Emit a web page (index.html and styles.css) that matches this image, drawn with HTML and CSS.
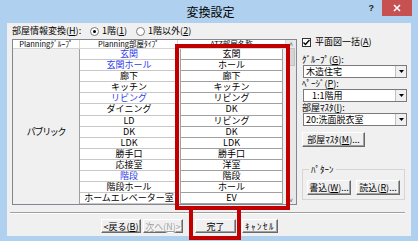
FILE: index.html
```html
<!DOCTYPE html>
<html lang="ja">
<head>
  <meta charset="UTF-8">
  <title>変換設定</title>
  <link rel="stylesheet" href="styles.css">
</head>
<body>

<div class="window">
  <div class="titlebar">
    <span></span>
    <span class="title">変換設定</span>
    <div class="controls">
      <span class="help">?</span>
      <span class="close">
        <svg width="8" height="8" viewBox="0 0 8 8"><path d="M1 1L7 7M7 1L1 7" stroke="#fff" stroke-width="1.6"/></svg>
      </span>
    </div>
  </div>

  <div class="client">
    <div class="main">
      <div class="left">
        <div class="mode-row">
          <span class="mode-label">部屋情報変換(<u>H</u>):</span>
          <span class="radio checked"></span><span class="radio-text">1階(<u>1</u>)</span>
          <span class="radio"></span><span class="radio-text">1階以外(<u>2</u>)</span>
        </div>

        <div class="grid">
          <div class="head">Planningｸﾞﾙｰﾌﾟ</div>
          <div class="head">Planning部屋ﾀｲﾌﾟ</div>
          <div class="head">ATZ部屋名称</div>
          <div class="scroll">
            <span class="arrow">&#x02C4;</span>
            <span class="thumb"></span>
            <span class="track"></span>
            <span class="arrow">&#x02C5;</span>
          </div>

          <div class="group-cell"><span>パブリック</span></div>

          <div class="type blue">玄関</div><div class="name">玄関</div>
          <div class="type blue">玄関ホール</div><div class="name">ホール</div>
          <div class="type">廊下</div><div class="name">廊下</div>
          <div class="type">キッチン</div><div class="name">キッチン</div>
          <div class="type blue">リビング</div><div class="name">リビング</div>
          <div class="type">ダイニング</div><div class="name">DK</div>
          <div class="type">LD</div><div class="name">リビング</div>
          <div class="type">DK</div><div class="name">DK</div>
          <div class="type">LDK</div><div class="name">LDK</div>
          <div class="type">勝手口</div><div class="name">勝手口</div>
          <div class="type">応接室</div><div class="name">洋室</div>
          <div class="type blue">階段</div><div class="name">階段</div>
          <div class="type">階段ホール</div><div class="name">ホール</div>
          <div class="type">ホームエレベーター室</div><div class="name">EV</div>
        </div>
      </div>

      <div class="side">
        <div class="check-row">
          <span class="checkbox">
            <svg width="7" height="7" viewBox="0 0 7 7"><path d="M0.5 3.5L2.5 5.5L6.5 1" fill="none" stroke="#000" stroke-width="1.4"/></svg>
          </span>
          <span>平面図一括(<u>A</u>)</span>
        </div>

        <div class="field-label">ｸﾞﾙｰﾌﾟ(<u>G</u>):</div>
        <div class="select">
          <span class="value">木造住宅</span>
          <span class="drop"><svg width="5" height="3" viewBox="0 0 5 3"><path d="M0 0H5L2.5 3Z" fill="#000"/></svg></span>
        </div>

        <div class="field-label">ﾍﾟｰｼﾞ(<u>P</u>):</div>
        <div class="select">
          <span class="value indent">1:1階用</span>
          <span class="drop"><svg width="5" height="3" viewBox="0 0 5 3"><path d="M0 0H5L2.5 3Z" fill="#000"/></svg></span>
        </div>

        <div class="field-label">部屋ﾏｽﾀ(<u>I</u>):</div>
        <div class="select">
          <span class="value">20:洗面脱衣室</span>
          <span class="drop"><svg width="5" height="3" viewBox="0 0 5 3"><path d="M0 0H5L2.5 3Z" fill="#000"/></svg></span>
        </div>

        <button class="btn master-btn">部屋ﾏｽﾀ(<u>M</u>)...</button>

        <fieldset class="pattern">
          <legend>ﾊﾟﾀｰﾝ</legend>
          <button class="btn pattern-btn">書込(<u>W</u>)...</button>
          <button class="btn pattern-btn">読込(<u>R</u>)...</button>
        </fieldset>
      </div>
    </div>

    <div class="separator"></div>

    <div class="footer">
      <button class="btn back-btn">&lt;戻る(<u>B</u>)</button>
      <button class="btn next-btn" disabled>次へ(<u>N</u>)&gt;</button>
      <button class="btn done-btn">完了</button>
      <button class="btn cancel-btn">ｷｬﾝｾﾙ</button>
    </div>
  </div>

  <!-- 赤枠 -->
  <div class="mark mark-list"></div>
  <div class="mark mark-ok"></div>
</div>

</body>
</html>
```

FILE: styles.css
```css
* {
  box-sizing: border-box;
}
body {
  margin: 0;
  font-family: "Noto Sans CJK JP", sans-serif;
  font-size: 9px;
  color: #000;
}
u {
  text-decoration: underline;
  text-underline-offset: 1px;
}
.window {
  position: relative;
  width: 418px;
  height: 241px;
  background: #afd0ef;
  display: flex;
  flex-direction: column;
}
.titlebar {
  height: 23px;
  display: grid;
  grid-template-columns: 1fr auto 1fr;
}
.title {
  font-size: 12px;
  line-height: 23px;
  padding-left: 3px;
}
.controls {
  display: flex;
  justify-content: flex-end;
  align-items: flex-start;
  padding-right: 6px;
}
.help {
  font-family: "Liberation Sans", sans-serif;
  font-size: 9px;
  font-weight: bold;
  line-height: 16px;
  margin-right: 8px;
  color: #222;
}
.close {
  width: 30px;
  height: 16px;
  background: #c75050;
  display: flex;
  align-items: center;
  justify-content: center;
}
.client {
  margin: 0 7px 5px;
  height: 213px;
  background: #f0f0f0;
  display: flex;
  flex-direction: column;
}
.main {
  height: 189px;
  display: flex;
}
.left {
  width: 290px;
  padding: 2px 0 0 5px;
}
.mode-row {
  height: 12px;
  display: flex;
  align-items: center;
  line-height: 12px;
}
.mode-label {
  width: 78px;
}
.radio {
  width: 9px;
  height: 9px;
  border: 1px solid #7a7a7a;
  border-radius: 50%;
  background: #fff;
  display: flex;
  align-items: center;
  justify-content: center;
  margin-right: 3px;
}
.radio.checked::after {
  content: "";
  width: 3px;
  height: 3px;
  border-radius: 50%;
  background: #000;
}
.radio-text {
  margin-right: 9px;
}

/* 一覧 */
.grid {
  margin-top: 2px;
  width: 285px;
  border: 1px solid #828790;
  background: #f0f0f0;
  display: grid;
  grid-template-columns: 67px 98px 108px 10px;
  grid-template-rows: 9px repeat(14, 11.1px);
  line-height: 10px;
}
.head {
  background: #fff;
  border-right: 1px solid #d5d5d5;
  border-bottom: 1px solid #d5d5d5;
  text-align: center;
  font-size: 7.5px;
  line-height: 8px;
  white-space: nowrap;
}
.scroll {
  grid-column: 4;
  grid-row: 1 / span 15;
  background: #e8e8e8;
  display: flex;
  flex-direction: column;
  align-items: center;
  font-size: 7px;
  line-height: 8px;
  color: #606060;
}
.thumb {
  width: 7px;
  height: 18px;
  background: #d4d4d4;
  border: 1px solid #c2c2c2;
}
.track {
  flex: 1;
}
.group-cell {
  grid-column: 1;
  grid-row: 2 / span 14;
  border-right: 1px solid #a0a0a0;
  display: flex;
  align-items: center;
  justify-content: center;
  padding-top: 10px;
  letter-spacing: -1.3px;
}
.type {
  grid-column: 2;
  background: #fff;
  border-bottom: 1px solid #c8c8c8;
  text-align: center;
  white-space: nowrap;
}
.blue {
  color: #3040e8;
}
.name {
  grid-column: 3;
  margin: 0 3px 0 2px;
  background: #fff;
  border: 1px solid #a0a0a0;
  border-top: none;
  text-align: center;
}

/* 右側 */
.side {
  width: 106px;
  margin-left: 5px;
  padding-top: 14px;
}
.check-row {
  height: 10px;
  display: flex;
  align-items: center;
  gap: 4px;
  line-height: 10px;
}
.checkbox {
  width: 9px;
  height: 9px;
  border: 1px solid #333;
  background: #fff;
  display: flex;
  align-items: center;
  justify-content: center;
}
.field-label {
  height: 11px;
  line-height: 11px;
}
.check-row + .field-label {
  margin-top: 7px;
}
.select {
  width: 104px;
  height: 13px;
  margin-left: 1px;
  border: 1px solid #7a7a7a;
  background: #fff;
  display: flex;
  line-height: 11px;
}
.value {
  flex: 1;
  padding-left: 2px;
}
.value.indent {
  padding-left: 8px;
}
.drop {
  width: 11px;
  background: #f0f0f0;
  border-left: 1px solid #c0c0c0;
  display: flex;
  align-items: center;
  justify-content: center;
}
.btn {
  height: 15px;
  padding: 0;
  font-family: inherit;
  font-size: 9px;
  line-height: 11px;
  color: #000;
  background: #f0f0f0;
  border: 1px solid;
  border-color: #fff #696969 #696969 #fff;
  box-shadow: inset -1px -1px 0 #a0a0a0;
}
.btn:disabled {
  color: #a0a0a0;
  text-shadow: 1px 1px 0 #fff;
}
.master-btn {
  width: 63px;
  margin-top: 6px;
  display: block;
}
.pattern {
  width: 102px;
  margin: 17px 0 0;
  padding: 5px 4px 4px 4px;
  border: 1px solid #d5d5d5;
  display: flex;
  gap: 5px;
}
.pattern legend {
  padding: 0 2px;
  margin-left: 2px;
  line-height: 11px;
}
.pattern-btn {
  width: 44px;
}

/* 下部 */
.separator {
  height: 2px;
  margin: 0 6px 0 3px;
  border-top: 1px solid #a0a0a0;
  border-bottom: 1px solid #fff;
}
.footer {
  display: flex;
  padding: 5px 0 0 94px;
}
.footer .btn {
  height: 14px;
}
.back-btn {
  width: 40px;
}
.next-btn {
  width: 40px;
  margin-left: 2px;
}
.done-btn {
  width: 41px;
  margin-left: 12px;
}
.cancel-btn {
  width: 36px;
  margin-left: 6px;
  letter-spacing: 1.5px;
}

/* 赤枠 */
.mark {
  position: absolute;
  border: 4px solid #c00000;
}
.mark-list {
  left: 175px;
  top: 44px;
  width: 115px;
  height: 166px;
}
.mark-ok {
  left: 189px;
  top: 206px;
  width: 52px;
  height: 34px;
}
```
